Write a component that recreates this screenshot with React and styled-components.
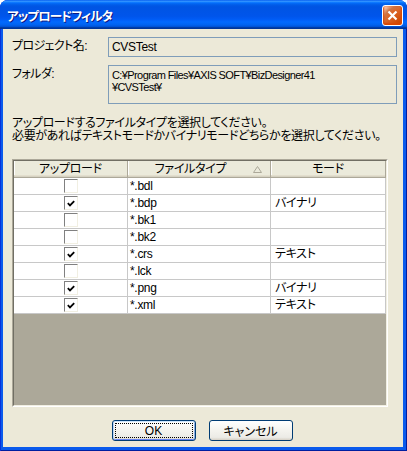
import React from 'react';
import styled, { createGlobalStyle } from 'styled-components';

const GlobalStyle = createGlobalStyle`
  html, body { margin: 0; padding: 0; background: #fff; }
  body {
    font-family: "Liberation Sans", "Noto Sans CJK JP", sans-serif;
    font-size: 12px;
    font-feature-settings: "palt";
    letter-spacing: -0.3px;
    color: #000;
  }
`;

const rows = [
  { ext: '*.bdl', on: false, mode: '' },
  { ext: '*.bdp', on: true, mode: 'バイナリ' },
  { ext: '*.bk1', on: false, mode: '' },
  { ext: '*.bk2', on: false, mode: '' },
  { ext: '*.crs', on: true, mode: 'テキスト' },
  { ext: '*.lck', on: false, mode: '' },
  { ext: '*.png', on: true, mode: 'バイナリ' },
  { ext: '*.xml', on: true, mode: 'テキスト' },
];

const Window = styled.div`
  width: 407px;
  height: 451px;
  box-sizing: border-box;
  display: flex;
  flex-direction: column;
  background: #0A5AEC;
  border-radius: 8px 8px 0 0;
  overflow: hidden;
  box-shadow: inset 1px 0 #0831D9, inset -1px -1px #001EA0;
`;

const TitleBar = styled.div`
  height: 29px;
  flex: none;
  display: flex;
  align-items: center;
  justify-content: space-between;
  padding: 1px 4px 0 7px;
  box-sizing: border-box;
  background: linear-gradient(180deg, #0058EE 0%, #3593FF 4%, #288EFF 6%, #127DFF 8%, #036FFC 10%, #0262EE 14%, #0057E5 20%, #0054E3 24%, #0055EB 56%, #005BF5 66%, #026AFE 76%, #0062EF 86%, #0052D6 92%, #0040AB 94%, #003092 100%);
`;

const Title = styled.span`
  color: #fff;
  font-weight: bold;
  font-size: 12.5px;
  letter-spacing: -0.9px;
  text-shadow: 1px 1px #0A1883;
`;

const CloseButton = styled.div`
  width: 21px;
  height: 21px;
  box-sizing: border-box;
  border: 1px solid #fff;
  border-radius: 3px;
  display: flex;
  align-items: center;
  justify-content: center;
  background: radial-gradient(circle at 90% 90%, #cc4600 0%, #dc6527 55%, #cd7546 70%, #ffccb2 90%, #fff 100%);
  box-shadow: inset 0 -1px 2px 1px #da4600;
`;

const Client = styled.div`
  flex: 1;
  margin: 0 4px 4px 3px;
  background: #ECE9D8;
  padding: 8px 6px 6px 9px;
  display: flex;
  flex-direction: column;
`;

const Fields = styled.div`
  display: grid;
  grid-template-columns: 96px 289px;
  row-gap: 8px;
`;

const Label = styled.div`
  padding-top: 3px;
  line-height: 12px;
  letter-spacing: -0.6px;
`;

const Field = styled.div`
  box-sizing: border-box;
  height: ${p => p.$h}px;
  border: 1px solid #7F9DB9;
  background: #ECE9D8;
  padding: 3px 3px;
  font-size: ${p => p.$size || 12}px;
  letter-spacing: ${p => (p.$size ? -0.6 : -0.3)}px;
  line-height: 12px;
`;

const Note = styled.p`
  margin: 13px 0 0;
  line-height: 13px;
  letter-spacing: -0.35px;
`;

const List = styled.div`
  margin-top: 16px;
  width: 376px;
  height: 248px;
  box-sizing: border-box;
  border: 1px solid;
  border-color: #ACA899 #fff #fff #ACA899;
`;

const ListInner = styled.div`
  height: 100%;
  box-sizing: border-box;
  border: 1px solid;
  border-color: #716F64 #F1EFE2 #F1EFE2 #716F64;
  background: #ACA899;
  display: flex;
  flex-direction: column;
`;

const Grid = styled.div`
  display: grid;
  grid-template-columns: 114px 143px 115px;
  background: #fff;
`;

const HeadCell = styled.div`
  height: 17px;
  box-sizing: border-box;
  background: #EBEADB;
  border-right: 1px solid #ACA899;
  border-bottom: 1px solid #ACA899;
  box-shadow: inset 0 -1px #D6D2C2, inset 0 -2px #E2DECD, inset 1px 0 #fff;
  display: flex;
  align-items: center;
  line-height: 14px;
`;

const HeadText = styled.span`
  flex: 1;
  text-align: center;
`;

const SortMark = styled.svg`
  flex: none;
  margin-right: 8px;
`;

const Cell = styled.div`
  height: 17px;
  box-sizing: border-box;
  border-right: 1px solid #C8C8C8;
  border-bottom: 1px solid #C8C8C8;
  display: flex;
  align-items: center;
  justify-content: ${p => (p.$center ? 'center' : 'flex-start')};
  padding-left: ${p => (p.$center ? 0 : p.$pad || 2)}px;
  line-height: 14px;
  white-space: nowrap;
`;

const Check = styled.div`
  width: 14px;
  height: 14px;
  box-sizing: border-box;
  border: 1px solid;
  border-color: #808080 #F1EFE2 #F1EFE2 #808080;
  background: #fff;
  display: flex;
  align-items: center;
  justify-content: center;
`;

const Buttons = styled.div`
  margin-top: 13px;
  display: flex;
  justify-content: center;
  gap: 13px;
  padding-right: 5px;
`;

const Button = styled.button`
  width: 84px;
  height: 21px;
  box-sizing: border-box;
  position: relative;
  padding: 0;
  border: 1px solid #003C74;
  border-radius: 3px;
  background: linear-gradient(180deg, #fff 0%, #F4F3EE 50%, #ECEBE6 86%, #D6D0C5 100%);
  font: inherit;
  font-size: 12px;
  color: #000;
  box-shadow: ${p =>
    p.$default
      ? 'inset 0 1px #CEE7FF, inset 1px 0 #BCD4F6, inset -1px 0 #89ADE4, inset 0 -1px #6982EE'
      : 'none'};
  &::after {
    content: '';
    display: ${p => (p.$default ? 'block' : 'none')};
    position: absolute;
    inset: 2px;
    border: 1px dotted #000;
  }
`;

const Tick = () => (
  <svg width="8" height="7" viewBox="0 0 8 7">
    <path d="M0.8 3.2 L3 5.4 L7.2 1.2" fill="none" stroke="#000" strokeWidth="1.8" />
  </svg>
);

export default function App() {
  return (
    <>
      <GlobalStyle />
      <Window>
        <TitleBar>
          <Title>アップロードフィルタ</Title>
          <CloseButton>
            <svg width="11" height="11" viewBox="0 0 11 11">
              <path d="M1.5 1.5 L9.5 9.5 M9.5 1.5 L1.5 9.5" stroke="#fff" strokeWidth="2.2" />
            </svg>
          </CloseButton>
        </TitleBar>
        <Client>
          <Fields>
            <Label>プロジェクト名:</Label>
            <Field $h={20}>CVSTest</Field>
            <Label>フォルダ:</Label>
            <Field $h={39} $size={11}>
              C:¥Program Files¥AXIS SOFT¥BizDesigner41
              <br />
              ¥CVSTest¥
            </Field>
          </Fields>
          <Note>
            アップロードするファイルタイプを選択してください。
            <br />
            必要があればテキストモードかバイナリモードどちらかを選択してください。
          </Note>
          <List>
            <ListInner>
              <Grid>
                <HeadCell>
                  <HeadText>アップロード</HeadText>
                </HeadCell>
                <HeadCell>
                  <HeadText>ファイルタイプ</HeadText>
                  <SortMark width="9" height="7" viewBox="0 0 9 7">
                    <path d="M4.5 0.5 L8.5 6.5 L0.5 6.5 Z" fill="none" stroke="#ACA899" strokeWidth="1" />
                  </SortMark>
                </HeadCell>
                <HeadCell>
                  <HeadText>モード</HeadText>
                </HeadCell>
                {rows.map(r => (
                  <React.Fragment key={r.ext}>
                    <Cell $center>
                      <Check>{r.on && <Tick />}</Check>
                    </Cell>
                    <Cell $pad={2}>{r.ext}</Cell>
                    <Cell $pad={4}>{r.mode}</Cell>
                  </React.Fragment>
                ))}
              </Grid>
            </ListInner>
          </List>
          <Buttons>
            <Button $default>OK</Button>
            <Button>キャンセル</Button>
          </Buttons>
        </Client>
      </Window>
    </>
  );
}
